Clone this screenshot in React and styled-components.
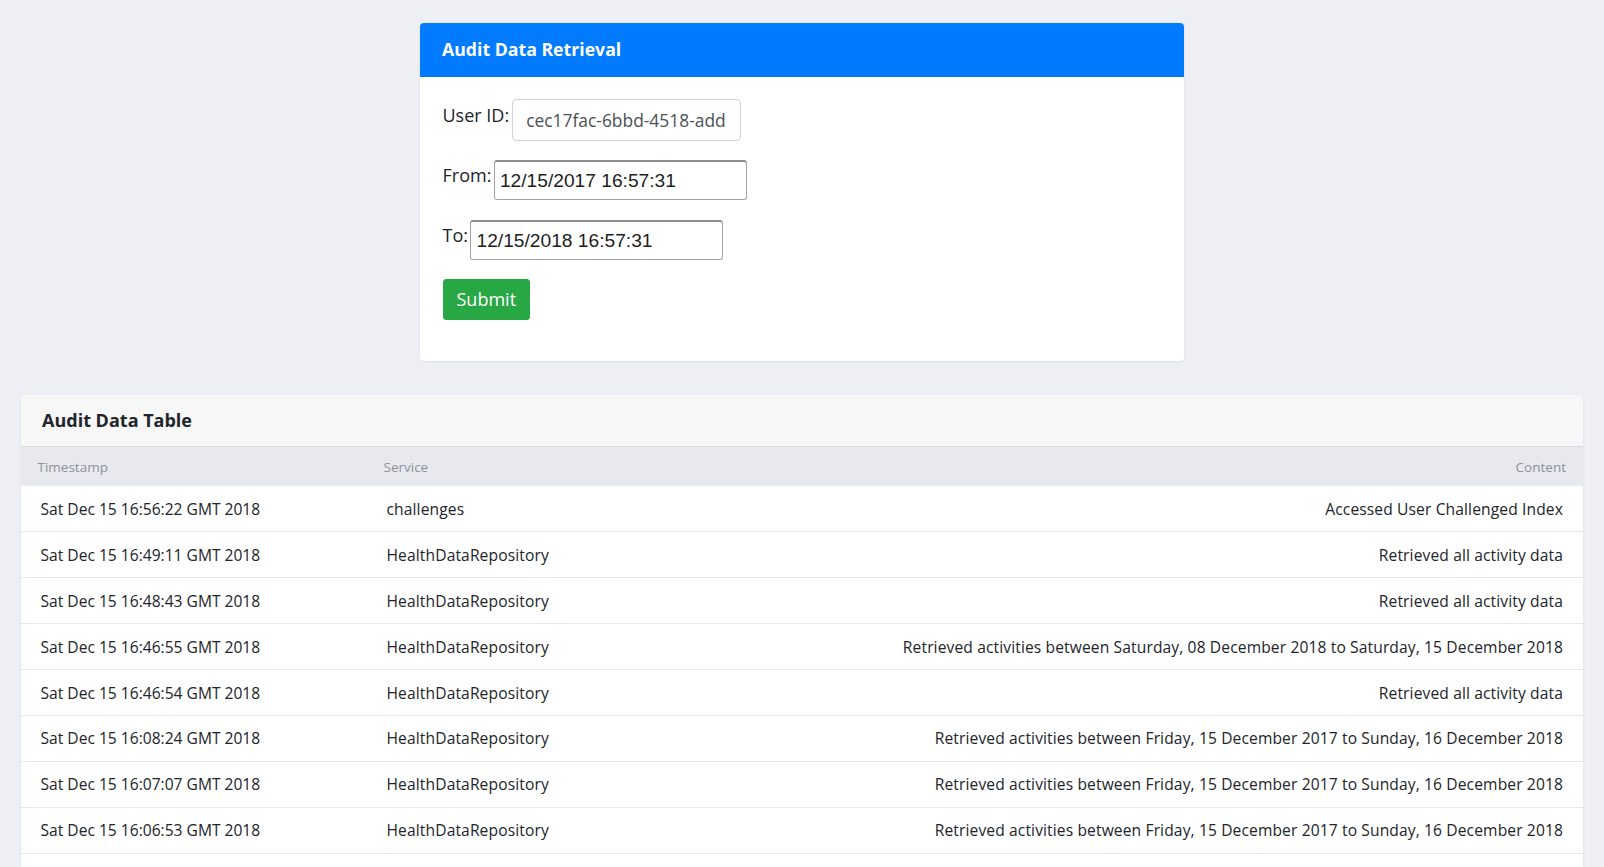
import styled, { createGlobalStyle } from 'styled-components';

const GlobalStyle = createGlobalStyle`
  html, body {
    margin: 0;
    padding: 0;
    overflow: hidden;
    background: #eeeff4;
    font-family: "Open Sans", "Liberation Sans", sans-serif;
    font-size: 18px;
    color: #212529;
  }
`;

const rows = [
    ['Sat Dec 15 16:56:22 GMT 2018', 'challenges', 'Accessed User Challenged Index'],
    ['Sat Dec 15 16:49:11 GMT 2018', 'HealthDataRepository', 'Retrieved all activity data'],
    ['Sat Dec 15 16:48:43 GMT 2018', 'HealthDataRepository', 'Retrieved all activity data'],
    ['Sat Dec 15 16:46:55 GMT 2018', 'HealthDataRepository', 'Retrieved activities between Saturday, 08 December 2018 to Saturday, 15 December 2018'],
    ['Sat Dec 15 16:46:54 GMT 2018', 'HealthDataRepository', 'Retrieved all activity data'],
    ['Sat Dec 15 16:08:24 GMT 2018', 'HealthDataRepository', 'Retrieved activities between Friday, 15 December 2017 to Sunday, 16 December 2018'],
    ['Sat Dec 15 16:07:07 GMT 2018', 'HealthDataRepository', 'Retrieved activities between Friday, 15 December 2017 to Sunday, 16 December 2018'],
    ['Sat Dec 15 16:06:53 GMT 2018', 'HealthDataRepository', 'Retrieved activities between Friday, 15 December 2017 to Sunday, 16 December 2018'],
];

const App = () => {
    return (
        <Page>
            <GlobalStyle />
            <RetrievalCard>
                <PrimaryHeader>Audit Data Retrieval</PrimaryHeader>
                <CardBody>
                    <FormRow>
                        <Label>User ID:</Label>
                        <TextInput defaultValue="cec17fac-6bbd-4518-add" />
                    </FormRow>
                    <FormRow>
                        <Label>From:</Label>
                        <DateInput defaultValue="12/15/2017 16:57:31" />
                    </FormRow>
                    <FormRow>
                        <Label>To:</Label>
                        <DateInput defaultValue="12/15/2018 16:57:31" />
                    </FormRow>
                    <SubmitButton>Submit</SubmitButton>
                </CardBody>
            </RetrievalCard>

            <TableCard>
                <LightHeader>Audit Data Table</LightHeader>
                <Table>
                    <thead>
                        <tr>
                            <Th $width="346px">Timestamp</Th>
                            <Th $width="500px">Service</Th>
                            <Th $right>Content</Th>
                        </tr>
                    </thead>
                    <tbody>
                        {rows.map(([time, service, content]) => (
                            <tr key={time}>
                                <Td>{time}</Td>
                                <Td $spaced>{service}</Td>
                                <Td $right $spaced>{content}</Td>
                            </tr>
                        ))}
                    </tbody>
                </Table>
            </TableCard>
        </Page>
    );
};

const Page = styled.main`
  display: flex;
  flex-direction: column;
  padding-top: 22.5px;
  height: 867px;
  box-sizing: border-box;
`;

const RetrievalCard = styled.section`
  width: 764px;
  margin: 0 auto;
  background: #fff;
  border-radius: 4px;
  overflow: hidden;
  box-shadow: 0 1px 3px rgba(40, 50, 80, 0.08);
`;

const PrimaryHeader = styled.h2`
  margin: 0;
  background: #007bff;
  color: #fff;
  font-size: 17.7px;
  font-weight: 700;
  line-height: 27px;
  padding: 13px 22px;
  border-bottom: 1px solid #0a70e0;
`;

const CardBody = styled.div`
  padding: 22.5px 22.5px 41px;
`;

const FormRow = styled.div`
  display: flex;
  align-items: center;
  margin-bottom: 19.5px;
`;

const Label = styled.label`
  line-height: 27px;
  margin: 0 2.5px 9px 0;
  color: #212529;
`;

const TextInput = styled.input`
  box-sizing: border-box;
  width: 229px;
  height: 41.5px;
  padding: 6px 10px 6px 13.5px;
  font-family: "Open Sans", sans-serif;
  font-size: 17.4px;
  color: #495057;
  border: 1px solid #ced4da;
  border-radius: 4px;
  outline: none;
`;

const DateInput = styled.input`
  box-sizing: border-box;
  width: 253px;
  height: 40px;
  padding: 1px 5px 0;
  font-family: "Liberation Sans", Arial, sans-serif;
  font-size: 19.2px;
  color: #1e1e1e;
  border: 1px solid #a3a3a3;
  border-top: 2px solid #8e8e8e;
  border-radius: 3px;
  outline: none;
`;

const SubmitButton = styled.button`
  display: block;
  margin-top: 1px;
  height: 40.5px;
  padding: 0 13px;
  background: #28a745;
  border: 1px solid #28a745;
  border-radius: 3px;
  color: #fff;
  font-family: "Open Sans", sans-serif;
  font-size: 18px;
`;

const TableCard = styled.section`
  flex: 1;
  margin: 34px 21px 0 20.5px;
  background: #fff;
  border-radius: 5px 5px 0 0;
  overflow: hidden;
  box-shadow: 0 1px 3px rgba(40, 50, 80, 0.08);
`;

const LightHeader = styled.h2`
  margin: 0;
  background: #f7f7f7;
  font-size: 18px;
  font-weight: 700;
  line-height: 27px;
  padding: 12.5px 21.5px 12px;
  border-bottom: 1px solid #dcdcdf;
  color: #212529;
`;

const Table = styled.table`
  width: 100%;
  border-collapse: collapse;
  table-layout: fixed;
`;

const Th = styled.th`
  box-sizing: border-box;
  width: ${({ $width }) => $width || 'auto'};
  height: 39px;
  padding: 0 17px;
  background: #e8e9ee;
  color: #8b929c;
  font-size: 13.5px;
  font-weight: 400;
  text-align: ${({ $right }) => ($right ? 'right' : 'left')};
`;

const Td = styled.td`
  box-sizing: border-box;
  height: 45.9px;
  padding: 0 20px;
  border-bottom: 1px solid #e6e7ea;
  font-size: 15.6px;
  letter-spacing: ${({ $spaced }) => ($spaced ? '0.12px' : '0')};
  color: #212429;
  white-space: nowrap;
  text-align: ${({ $right }) => ($right ? 'right' : 'left')};
`;

export default App;
